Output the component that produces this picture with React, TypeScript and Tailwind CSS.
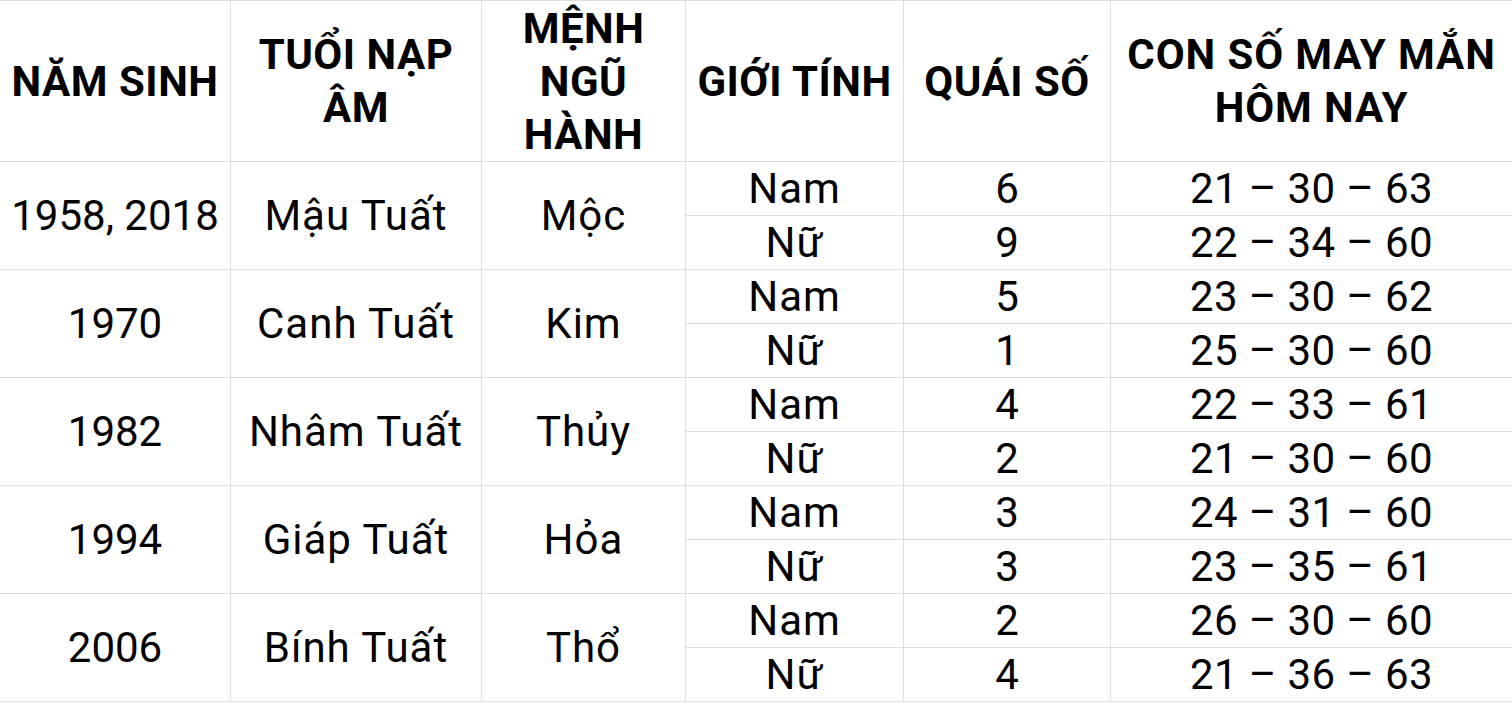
import React from "react";

type Group = {
  year: string;
  napAm: string;
  menh: string;
  rows: { gender: string; quai: string; lucky: string }[];
};

const groups: Group[] = [
  {
    year: "1958, 2018",
    napAm: "Mậu Tuất",
    menh: "Mộc",
    rows: [
      { gender: "Nam", quai: "6", lucky: "21 – 30 – 63" },
      { gender: "Nữ", quai: "9", lucky: "22 – 34 – 60" },
    ],
  },
  {
    year: "1970",
    napAm: "Canh Tuất",
    menh: "Kim",
    rows: [
      { gender: "Nam", quai: "5", lucky: "23 – 30 – 62" },
      { gender: "Nữ", quai: "1", lucky: "25 – 30 – 60" },
    ],
  },
  {
    year: "1982",
    napAm: "Nhâm Tuất",
    menh: "Thủy",
    rows: [
      { gender: "Nam", quai: "4", lucky: "22 – 33 – 61" },
      { gender: "Nữ", quai: "2", lucky: "21 – 30 – 60" },
    ],
  },
  {
    year: "1994",
    napAm: "Giáp Tuất",
    menh: "Hỏa",
    rows: [
      { gender: "Nam", quai: "3", lucky: "24 – 31 – 60" },
      { gender: "Nữ", quai: "3", lucky: "23 – 35 – 61" },
    ],
  },
  {
    year: "2006",
    napAm: "Bính Tuất",
    menh: "Thổ",
    rows: [
      { gender: "Nam", quai: "2", lucky: "26 – 30 – 60" },
      { gender: "Nữ", quai: "4", lucky: "21 – 36 – 63" },
    ],
  },
];

const headers = [
  "NĂM SINH",
  "TUỔI NẠP ÂM",
  "MỆNH NGŨ HÀNH",
  "GIỚI TÍNH",
  "QUÁI SỐ",
  "CON SỐ MAY MẮN HÔM NAY",
];

const cell = "flex items-center justify-center text-center border-b border-r border-[#dddddd]";

export default function App() {
  return (
    <div className="w-[1512px] h-[706px] overflow-hidden bg-white text-black font-['Roboto',_'Liberation_Sans',_sans-serif] text-[42px] leading-[53px]">
      <div className="grid grid-cols-[231px_251px_204px_218px_207px_1fr] border-t border-[#dddddd]">
        {/* header */}
        {headers.map((h, i) => (
          <div
            key={h}
            className={`${cell} h-[161px] font-bold ${i === 5 ? "border-r-0 px-2 tracking-[0.9px]" : "px-1 tracking-[0.5px]"}`}
          >
            {h}
          </div>
        ))}

        {groups.map((g) => (
          <React.Fragment key={g.year}>
            <div className={`${cell} row-span-2`}>{g.year}</div>
            <div className={`${cell} row-span-2 tracking-[1px]`}>{g.napAm}</div>
            <div className={`${cell} row-span-2 tracking-[1px]`}>{g.menh}</div>
            {g.rows.map((r, idx) => (
              <React.Fragment key={idx}>
                <div className={`${cell} h-[54px] tracking-[1px] ${idx === 1 ? "col-start-4" : ""}`}>{r.gender}</div>
                <div className={`${cell} h-[54px]`}>{r.quai}</div>
                <div className={`${cell} h-[54px] border-r-0 tracking-[0.4px]`}>{r.lucky}</div>
              </React.Fragment>
            ))}
          </React.Fragment>
        ))}
      </div>
    </div>
  );
}
